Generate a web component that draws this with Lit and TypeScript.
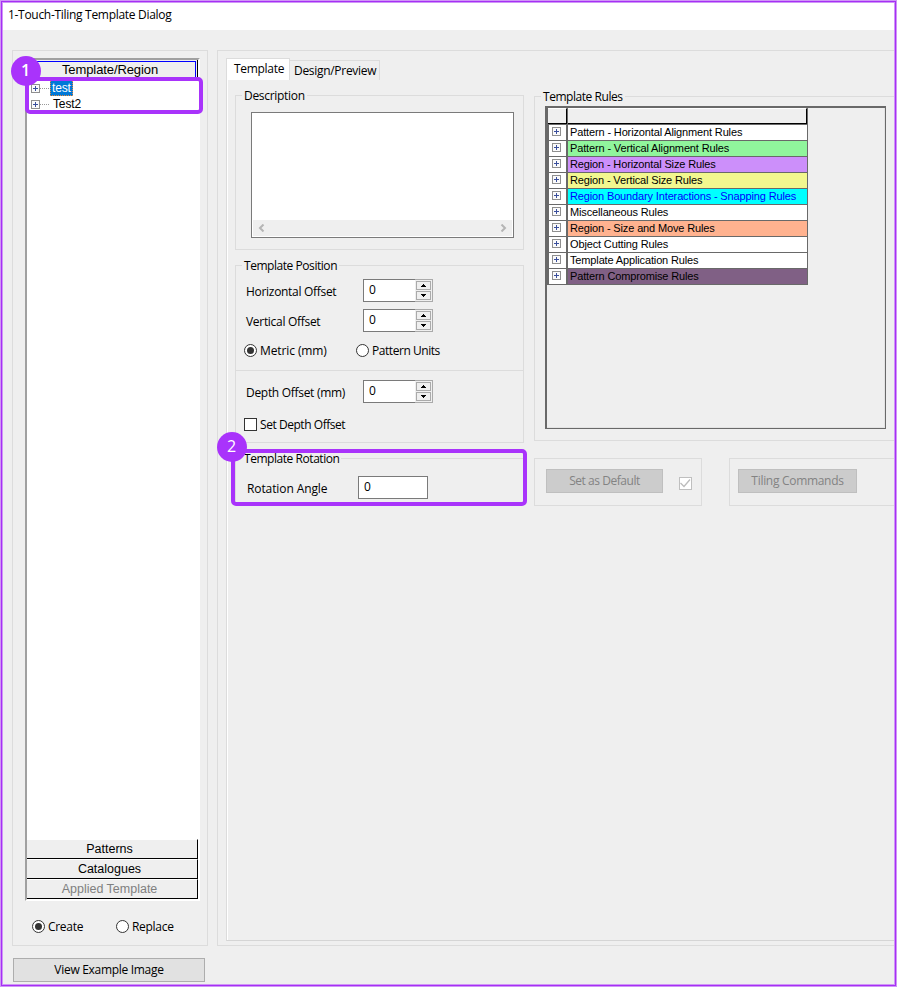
import { LitElement, html, css, svg } from "lit";
import { customElement } from "lit/decorators.js";
import { styleMap } from "lit/directives/style-map.js";

interface Rule { label: string; fill: string; ink?: string }

const RULES: Rule[] = [
  { label: "Pattern - Horizontal Alignment Rules", fill: "#ffffff" },
  { label: "Pattern - Vertical Alignment Rules", fill: "#90f59c" },
  { label: "Region - Horizontal Size Rules", fill: "#cc8ffa" },
  { label: "Region - Vertical Size Rules", fill: "#f2f78f" },
  { label: "Region Boundary Interactions - Snapping Rules", fill: "#00ffff", ink: "#0000ff" },
  { label: "Miscellaneous Rules", fill: "#ffffff" },
  { label: "Region - Size and Move Rules", fill: "#ffb28f" },
  { label: "Object Cutting Rules", fill: "#ffffff" },
  { label: "Template Application Rules", fill: "#ffffff" },
  { label: "Pattern Compromise Rules", fill: "#806085" },
];

const expander = html`<svg class="plus" width="9" height="9" viewBox="0 0 9 9" shape-rendering="crispEdges">
  <rect x=".5" y=".5" width="8" height="8" fill="#fafafa" stroke="#8f8f8f"></rect>
  <path d="M2 4.5h5M4.5 2v5" stroke="#3a4f9c" fill="none"></path>
</svg>`;

const radio = (on: boolean) => html`<svg class="mark" width="13" height="13" viewBox="0 0 13 13">
  <circle cx="6.5" cy="6.5" r="6" fill="#fff" stroke="#333"></circle>
  ${on ? svg`<circle cx="6.5" cy="6.5" r="3.5" fill="#333"></circle>` : ""}
</svg>`;

const arrow = (d: string) => html`<span class="arrow"><svg width="5" height="3" viewBox="0 0 5 3" shape-rendering="crispEdges"><path d=${d} fill="#000"></path></svg></span>`;

const spinner = () => html`<span class="spin"><span class="val">0</span><span class="arrows">
  ${arrow("M2 0h1v1h1v1h1v1H0V2h1V1h1z")}${arrow("M0 0h5v1H4v1H3v1H2V2H1V1H0z")}
</span></span>`;

@customElement("app-root")
export class AppRoot extends LitElement {
  static styles = css`
    :host {
      display: block; position: relative; box-sizing: border-box;
      width: 897px; height: 987px; overflow: hidden; background: #efefef; color: #000;
      font: 12px/16px "Open Sans", "Noto Sans", sans-serif; letter-spacing: -0.3px; white-space: nowrap;
    }
    * { box-sizing: border-box; }
    svg { display: block; flex: none; }
    .tight { letter-spacing: -0.45px; }
    .loose { letter-spacing: -0.1px; }
    .frame { position: absolute; inset: 1px; border: 1px solid #a62ff5; box-shadow: 0 0 0 1px #cf96f6, inset 0 0 0 1px #cf96f6; pointer-events: none; }
    .title { height: 30px; background: #fff; padding: 7px 0 0 8px; }
    .body { display: flex; width: 960px; padding: 20px 0 0 12px; gap: 9px; }
    .left { width: 196px; height: 896px; border: 1px solid #dcdcdc; padding: 7px 7px 0 12px; }
    .tree { width: 175px; height: 843px; border: 2px solid #a0a0a0; border-right: 2px solid #fff; border-bottom: 2px solid #fff; background: #fff; display: flex; flex-direction: column; }
    .arial { font-family: "Liberation Sans", Arial, sans-serif; letter-spacing: -0.14px; }
    .bar { width: 171px; height: 20px; border-right: 1px solid #000; border-bottom: 1px solid #000; border-top: 1px solid #fff; background: #efefef; text-align: center; padding-right: 5px; font-size: 12.5px; line-height: 18px; letter-spacing: 0; }
    .bar.head { border: 0; border-right: 1px solid #000; padding: 1px 1px 0 0; font-size: 13px; letter-spacing: -0.1px; }
    .bar.head span { display: block; height: 19px; border-top: 1px solid #00f; border-right: 1px solid #00f; line-height: 16px; padding-right: 2px; }
    .bar.off { color: #808080; }
    .nodes { flex: 1; padding: 0 0 0 4px; font-size: 12px; }
    .node { display: flex; align-items: center; height: 16px; }
    .node i { width: 9px; border-top: 1px dotted #999; margin-right: 1px; }
    .node b { font-weight: 400; padding: 0 3px; line-height: 16px; }
    .node .sel { background: #0078d7; color: #fff; outline: 1px dotted #e68a3c; outline-offset: -1px; padding: 0 2px; }
    .row { display: flex; align-items: center; height: 17px; }
    .mark { margin-right: 3px; }
    .modes { margin: 17px 0 0 7px; }
    .modes .row:first-child { width: 84px; }
    .push { margin: 12px 0 0 13px; width: 192px; height: 24px; border: 1px solid #adadad; background: #e1e1e1; text-align: center; line-height: 22px; }
    .right { width: 730px; height: 896px; border: 1px solid #dcdcdc; padding: 7px 0 0 8px; }
    .tabs { display: flex; align-items: flex-end; height: 22px; }
    .tab { border: 1px solid #dcdcdc; border-bottom: 0; height: 20px; padding: 2px 3px 0 4px; width: 90px; border-left: 0; }
    .tab.on { background: #fff; width: 64px; height: 22px; border-left: 1px solid #dcdcdc; padding: 2px 0 0 7px; }
    .page { display: flex; gap: 10px; height: 861px; border-left: 1px solid #dcdcdc; border-bottom: 1px solid #d5d5d5; box-shadow: inset 1px 0 #fff; padding: 15px 0 0 8px; }
    .group { border: 1px solid #dcdcdc; }
    .cap { width: fit-content; background: #efefef; padding: 0 2px; margin: -8px 0 0 6px; height: 16px; }
    .desc { width: 289px; height: 155px; }
    .area { margin: 8px 0 0 15px; width: 263px; height: 126px; border: 1px solid #7a7a7a; background: #fff; padding: 107px 1px 1px; }
    .scroll { height: 16px; background: #efefef; display: flex; justify-content: space-between; align-items: center; padding: 0 5px; }
    .pos { width: 289px; height: 178px; margin-top: 15px; }
    .field { display: flex; height: 23px; padding-left: 10px; }
    .field label { width: 117px; padding-top: 5px; }
    .f1 { margin-top: 5px; }
    .f2 { margin-top: 7px; }
    .f3 { margin-top: 9px; }
    .f4 { margin-top: 9px; padding-left: 11px; }
    .f4 label { width: 111px; }
    .spin { display: flex; width: 70px; height: 23px; border: 1px solid #7a7a7a; background: #fff; }
    .val { flex: 1; padding: 2px 0 0 5px; }
    .arrows { width: 18px; height: 23px; margin: -1px -1px -1px 0; border: 1px solid #aaa; border-left: 0; background: #efefef; display: flex; flex-direction: column; gap: 1px; padding: 1px; }
    .arrow { border: 1px solid #aaa; display: flex; align-items: center; justify-content: center; flex: 1; }
    .units { margin: 10px 0 0 8px; }
    .units .row:first-child { width: 112px; }
    .sep { height: 1px; background: #dcdcdc; margin-top: 11px; }
    .check { margin: 13px 0 0 8px; }
    .box { width: 13px; height: 13px; border: 1px solid #333; background: #fff; margin-right: 3px; }
    .rot { width: 289px; height: 45px; margin-top: 15px; border-bottom: 0; }
    .angle { width: 70px; height: 23px; border: 1px solid #7a7a7a; background: #fff; padding: 2px 0 0 5px; }
    .rules { width: 390px; height: 345px; margin-top: 1px; }
    .list { margin: 1px 0 0 10px; width: 341px; height: 323px; border: 1px solid #696969; border-width: 2px 1px 1px 2px; box-shadow: inset -1px -1px #e3e3e3; }
    .grid { width: 261px; background: #696969; padding-left: 2px; font-size: 11px; line-height: 15px; }
    .gr { display: grid; grid-template-columns: 17px 239px; gap: 2px; height: 16px; border-bottom: 1px solid #696969; }
    .gr span { background: #fff; padding-left: 2px; height: 15px; display: block; }
    .gr .cell { display: flex; align-items: flex-start; padding: 2px 0 0 3px; }
    .gr.hd { height: 17px; margin-left: -1px; gap: 1px; grid-template-columns: 19px 239px; }
    .gr.hd span { height: 16px; background: #efefef; border-right: 1px solid #000; border-bottom: 1px solid #000; border-top: 1px solid #fff; }
    .pair { display: flex; gap: 27px; margin-top: 17px; }
    .defaults { width: 168px; height: 48px; display: flex; padding: 10px 0 0 11px; }
    .cmds { width: 190px; height: 48px; padding: 10px 0 0 8px; }
    .dim { width: 117px; height: 24px; border: 1px solid #bfbfbf; background: #ccc; color: #838383; text-align: center; line-height: 22px; }
    .cmds .dim { width: 119px; }
    .tick { margin: 8px 0 0 16px; }
    .ring { position: absolute; border: 4px solid #a933fb; border-radius: 5px; }
    .badge { position: absolute; width: 30px; height: 30px; border-radius: 50%; background: #a933fb; color: #fff; font: 600 16px/29px "Open Sans", sans-serif; text-align: center; letter-spacing: 0; }
    .r1 { left: 25px; top: 77px; width: 178px; height: 37px; }
    .r2 { left: 231px; top: 449px; width: 296px; height: 57px; }
    .b1 { left: 10.500px; top: 55.500px; }
    .b2 { left: 216.700px; top: 431.600px; font-weight: 400; }
  `;

  render() {
    return html`
      <div class="title">1-Touch-Tiling Template Dialog</div>
      <div class="body">
        <section class="left">
          <div class="tree arial">
            <div class="bar head"><span>Template/Region</span></div>
            <div class="nodes">
              <div class="node">${expander}<i></i><b class="sel">test</b></div>
              <div class="node">${expander}<i></i><b>Test2</b></div>
            </div>
            <div class="bar">Patterns</div>
            <div class="bar">Catalogues</div>
            <div class="bar off">Applied Template</div>
          </div>
          <div class="row modes">
            <div class="row">${radio(true)}Create</div>
            <div class="row">${radio(false)}Replace</div>
          </div>
        </section>
        <section class="right">
          <div class="tabs"><div class="tab on">Template</div><div class="tab">Design/Preview</div></div>
          <div class="page">
            <div>
              <div class="group desc">
                <div class="cap">Description</div>
                <div class="area"><div class="scroll">
                  <svg width="7" height="8" viewBox="0 0 7 8"><path d="M5.500 .5L2 4l3.500 3.500" fill="none" stroke="#b5b5b5" stroke-width="2"></path></svg>
                  <svg width="7" height="8" viewBox="0 0 7 8"><path d="M1.500 .5L5 4 1.500 7.500" fill="none" stroke="#b5b5b5" stroke-width="2"></path></svg>
                </div></div>
              </div>
              <div class="group pos">
                <div class="cap tight">Template Position</div>
                <div class="field f1"><label>Horizontal Offset</label>${spinner()}</div>
                <div class="field f2"><label>Vertical Offset</label>${spinner()}</div>
                <div class="row units"><div class="row loose">${radio(true)}Metric (mm)</div><div class="row tight">${radio(false)}Pattern Units</div></div>
                <div class="sep"></div>
                <div class="field f3"><label>Depth Offset (mm)</label>${spinner()}</div>
                <div class="row check tight"><span class="box"></span>Set Depth Offset</div>
              </div>
              <div class="group rot">
                <div class="cap tight">Template Rotation</div>
                <div class="field f4"><label class="loose">Rotation Angle</label><span class="angle">0</span></div>
              </div>
            </div>
            <div>
              <div class="group rules">
                <div class="cap tight">Template Rules</div>
                <div class="list"><div class="grid arial">
                  <div class="gr hd"><span></span><span></span></div>
                  ${RULES.map((r) => html`<div class="gr"><span class="cell">${expander}</span><span style=${styleMap({ background: r.fill, color: r.ink ?? "#000" })}>${r.label}</span></div>`)}
                </div></div>
              </div>
              <div class="pair">
                <div class="group defaults"><div class="dim tight">Set as Default</div>
                  <svg class="tick" width="13" height="13" viewBox="0 0 13 13"><rect x=".5" y=".5" width="12" height="12" fill="#fff" stroke="#bfbfbf"></rect><path d="M1.500 6l3.500 3.500 6-7" fill="none" stroke="#bcbcbc" stroke-width="1.300"></path></svg>
                </div>
                <div class="group cmds"><div class="dim">Tiling Commands</div></div>
              </div>
            </div>
          </div>
        </section>
      </div>
      <div class="push">View Example Image</div>
      <div class="ring r1"></div><div class="badge b1">1</div>
      <div class="ring r2"></div><div class="badge b2">2</div>
      <div class="frame"></div>
    `;
  }
}
